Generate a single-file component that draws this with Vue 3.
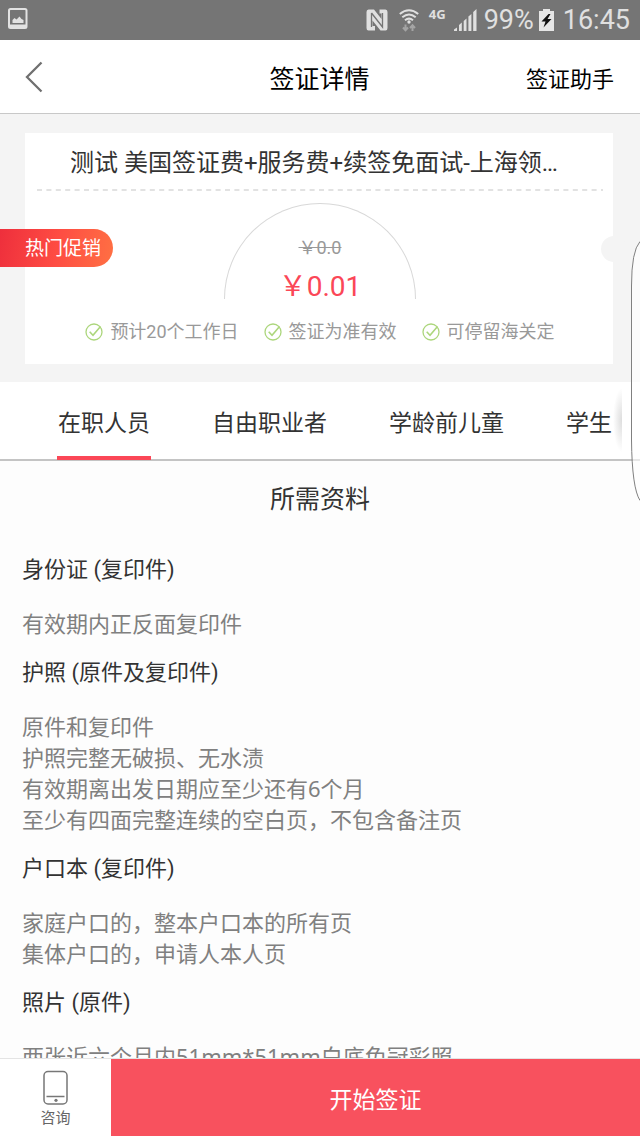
<script setup>
import { ref } from 'vue'

const active = ref(0)
const tabs = ['在职人员', '自由职业者', '学龄前儿童', '学生']
const features = ['预计20个工作日', '签证为准有效', '可停留海关定']
const materials = [
  { title: '身份证 (复印件)', lines: ['有效期内正反面复印件'] },
  {
    title: '护照 (原件及复印件)',
    lines: [
      '原件和复印件',
      '护照完整无破损、无水渍',
      '有效期离出发日期应至少还有6个月',
      '至少有四面完整连续的空白页，不包含备注页'
    ]
  },
  { title: '户口本 (复印件)', lines: ['家庭户口的，整本户口本的所有页', '集体户口的，申请人本人页'] },
  { title: '照片 (原件)', lines: ['两张近六个月内51mm*51mm白底免冠彩照'] }
]
</script>

<template>
  <div class="page">
    <div class="status">
      <svg class="shot" width="20" height="21" viewBox="0 0 20 21">
        <rect x="1" y="1" width="17.5" height="19" rx="1.5" fill="none" stroke="#e2e2e2" stroke-width="2" />
        <path d="M1 16.5h18V20H1z" fill="#e2e2e2" />
        <path d="M4.5 15v-3l2-2 2 1.500 3-3 2 2.500 2 1v3z" fill="#e2e2e2" />
      </svg>
      <div class="status-right">
        <svg width="22" height="22" viewBox="0 0 22 22">
          <path d="M2.500 0.500H8L15.500 10V4.500H13.500V0.500H19.500Q21.500 0.500 21.500 3V19Q21.500 21.500 19.500 21.500H14.500L6.500 11.500V17H9V21.500H2.500Q0.500 21.500 0.500 19V3Q0.500 0.500 2.500 0.500Z" fill="#e0e0e0" />
          <path d="M5.500 4V18M5.500 4L16.500 18V4" fill="none" stroke="#757575" stroke-width="1.300" />
        </svg>
        <svg class="wifi" width="20" height="23" viewBox="0 0 20 23" fill="none" stroke="#e0e0e0" stroke-width="2">
          <path d="M0.800 5Q10-2.500 19.200 5M3.300 8.300Q10 2.700 16.700 8.300M6 11.300Q10 8 14 11.300" />
          <circle cx="10" cy="13" r="1.700" fill="#e0e0e0" stroke="none" />
          <path d="M6.500 15.500v5M4 18.500l2.500 2.800L9 18.500M13.500 22v-5M11 19l2.500-2.800L16 19" stroke="#a4a4a4" />
        </svg>
        <span class="net">4G</span>
        <svg class="signal" width="23" height="22" viewBox="0 0 23 22" fill="#e0e0e0">
          <path d="M0 22v-1.500l3-2V22zM5 22v-6l2.800-2.500V22zM9.700 22V12l2.800-2.500V22zM14.400 22V7.500l3-2.500V22zM19.200 22V3L22.500 0v22z" />
        </svg>
        <span class="big">99%</span>
        <svg class="battery" width="15" height="22" viewBox="0 0 15 22">
          <path d="M4 0h7v2h4v20H0V2h4z" fill="#e6e6e6" />
          <path d="M9.500 5L2.500 12.500h4L4.500 18.500l8-8.500H8.500L11.500 5z" fill="#111" />
        </svg>
        <span class="big">16:45</span>
      </div>
    </div>

    <header class="nav">
      <button class="back" aria-label="返回">
        <svg width="20" height="32" viewBox="0 0 20 32">
          <path d="M16.500 1.500L2 16L16.500 30.500" fill="none" stroke="#707070" stroke-width="2.300" />
        </svg>
      </button>
      <h1>签证详情</h1>
      <a class="helper" href="#">签证助手</a>
    </header>

    <section class="hero">
      <div class="card">
        <h2>测试 美国签证费+服务费+续签免面试-上海领事馆</h2>
        <svg class="dash" height="2"><line x1="0" y1="1" x2="100%" y2="1" stroke="#e2e2e2" stroke-width="2" stroke-dasharray="5 4.400" /></svg>
        <div class="arc">
          <del>￥0.0</del>
          <strong>￥0.01</strong>
        </div>
        <ul class="features">
          <li v-for="f in features" :key="f">
            <svg width="18" height="18" viewBox="0 0 18 18" fill="none" stroke="#acd67c">
              <circle cx="9" cy="9" r="8" stroke-width="1.300" />
              <path d="M4.700 8.800L8 12.300L15.500 3.500" stroke-width="1.600" />
            </svg>
            <span>{{ f }}</span>
          </li>
        </ul>
        <span class="notch"></span>
      </div>
      <span class="badge">热门促销</span>
    </section>

    <nav class="tabs">
      <button v-for="(t, i) in tabs" :key="t" :class="{ on: i === active }" @click="active = i">{{ t }}</button>
      <span class="fade"></span>
    </nav>

    <main class="content">
      <h2>所需资料</h2>
      <section v-for="m in materials" :key="m.title">
        <h3>{{ m.title }}</h3>
        <p v-for="l in m.lines" :key="l">{{ l }}</p>
      </section>
    </main>

    <footer class="bar">
      <button class="ask">
        <svg width="26" height="36" viewBox="0 0 26 36" fill="none" stroke="#777" stroke-width="1.500">
          <rect x="1" y="1.500" width="23" height="32.500" rx="4" />
          <path d="M3.500 26.500h18" />
          <circle cx="13" cy="30.300" r="1.600" fill="#777" stroke="none" />
        </svg>
        <span>咨询</span>
      </button>
      <button class="start">开始签证</button>
    </footer>

    <svg class="edge" width="10" height="262" viewBox="0 0 10 262">
      <path d="M10 1.500Q1.500 11 1.500 46V200Q2 248 10 260.500" fill="#fff" fill-opacity=".6" stroke="#808080" />
    </svg>
  </div>
</template>

<style>
body {
  margin: 0;
  background: #fdfdfd;
}
</style>

<style scoped>
.page {
  position: relative;
  display: flex;
  flex-direction: column;
  height: 100vh;
  overflow: hidden;
  background: #fdfdfd;
  color: #333;
  font-family: Roboto, "Noto Sans CJK SC", sans-serif;
}
h1, h2, h3, p, ul {
  margin: 0;
  padding: 0;
  font-weight: 400;
}
button {
  margin: 0;
  padding: 0;
  border: 0;
  background: none;
  color: inherit;
  font: inherit;
}
svg {
  display: block;
  flex: none;
}
.status {
  flex: none;
  display: flex;
  justify-content: space-between;
  align-items: center;
  height: 40px;
  padding: 0 10px 0 8px;
  background: #757575;
  color: #e0e0e0;
}
.shot {
  margin-bottom: 3px;
}
.status-right {
  display: flex;
  align-items: center;
}
.wifi {
  margin-left: 11px;
}
.net {
  margin: 0 8px 12px 10px;
  font: 700 13px/16px "Noto Sans", sans-serif;
}
.signal {
  margin-right: 7px;
}
.big {
  font-size: 27px;
  line-height: 40px;
}
.battery {
  margin: 0 9px 0 5px;
}
.nav {
  flex: none;
  display: grid;
  grid-template-columns: 1fr auto 1fr;
  align-items: center;
  height: 73px;
  padding: 0 26px 0 25px;
  border-bottom: 1px solid #c8c8c8;
  background: #fff;
  color: #000;
}
.back {
  justify-self: start;
}
.nav h1 {
  font-size: 25px;
}
.helper {
  justify-self: end;
  color: #000;
  font-size: 22px;
  text-decoration: none;
}
.hero {
  flex: none;
  position: relative;
  padding: 19px 27px 18px 25px;
  background: #f4f4f4;
}
.card {
  position: relative;
  padding: 4px 10px 15px 12px;
  background: #fff;
}
.card h2 {
  padding: 0 42px 0 33px;
  overflow: hidden;
  font-size: 24px;
  line-height: 52px;
  text-overflow: ellipsis;
  white-space: nowrap;
}
.dash {
  width: 100%;
}
.arc {
  box-sizing: border-box;
  display: flex;
  flex-direction: column;
  align-items: center;
  width: 192px;
  height: 96px;
  margin: 12px auto 0;
  padding-top: 32px;
  border: 1px solid #d8d8d8;
  border-bottom: 0;
  border-radius: 96px 96px 0 0;
}
.arc del {
  color: #999;
  font-size: 18px;
  line-height: 24px;
}
.arc strong {
  margin-top: 9px;
  color: #fb4757;
  font-size: 28px;
  font-weight: 400;
  line-height: 36px;
}
.features {
  display: flex;
  justify-content: center;
  gap: 25px;
  margin-top: 16px;
  list-style: none;
}
.features li {
  display: flex;
  align-items: center;
  gap: 7px;
  color: #999;
  font-size: 18px;
  line-height: 34px;
  white-space: nowrap;
}
.notch {
  position: absolute;
  top: 103px;
  right: -14px;
  width: 26px;
  height: 26px;
  border-radius: 50%;
  background: #f4f4f4;
}
.badge {
  position: absolute;
  top: 115px;
  left: 0;
  padding: 2px 12px 0 25px;
  border-radius: 0 19px 19px 0;
  background: linear-gradient(100deg, #ee2f3c, #fe4c43 50%, #ff7043);
  color: #fff;
  font-size: 19px;
  line-height: 36px;
}
.tabs {
  flex: none;
  position: relative;
  display: flex;
  gap: 60px;
  height: 77px;
  padding-left: 57px;
  border-bottom: 2px solid #c4c4c4;
  background: #fff;
}
.tabs button {
  flex: none;
  height: 78px;
  padding: 0 1px;
  border-top: 3px solid transparent;
  border-bottom: 4px solid transparent;
  font-size: 23px;
  white-space: nowrap;
}
.tabs button.on {
  border-bottom-color: #fb4757;
}
.fade {
  position: absolute;
  top: 6px;
  right: 18px;
  width: 9px;
  height: 64px;
  background: radial-gradient(ellipse 9px 32px at right center, #ddd, rgba(255, 255, 255, 0));
}
.content {
  flex: 1;
  min-height: 0;
  overflow: hidden;
  padding: 0 22px;
}
.content h2 {
  margin-bottom: 35px;
  padding-top: 20px;
  font-size: 25px;
  line-height: 38px;
  text-align: center;
}
.content section {
  margin-bottom: 18px;
  font-size: 22px;
  line-height: 31px;
}
.content h3 {
  margin-bottom: 23px;
  font-size: 22px;
}
.content p {
  color: #808080;
  font-family: "Noto Sans", "Noto Sans CJK SC", sans-serif;
}
.bar {
  flex: none;
  display: flex;
  height: 77px;
  border-top: 1px solid #e4e4e4;
  background: #fff;
}
.ask {
  display: flex;
  flex-direction: column;
  align-items: center;
  width: 111px;
  padding-top: 11px;
  color: #666;
  font-size: 15px;
  line-height: 24px;
}
.start {
  flex: 1;
  background: #f8515e;
  color: #fff;
  font-size: 23px;
}
.edge {
  position: absolute;
  top: 240px;
  right: 0;
}
</style>
